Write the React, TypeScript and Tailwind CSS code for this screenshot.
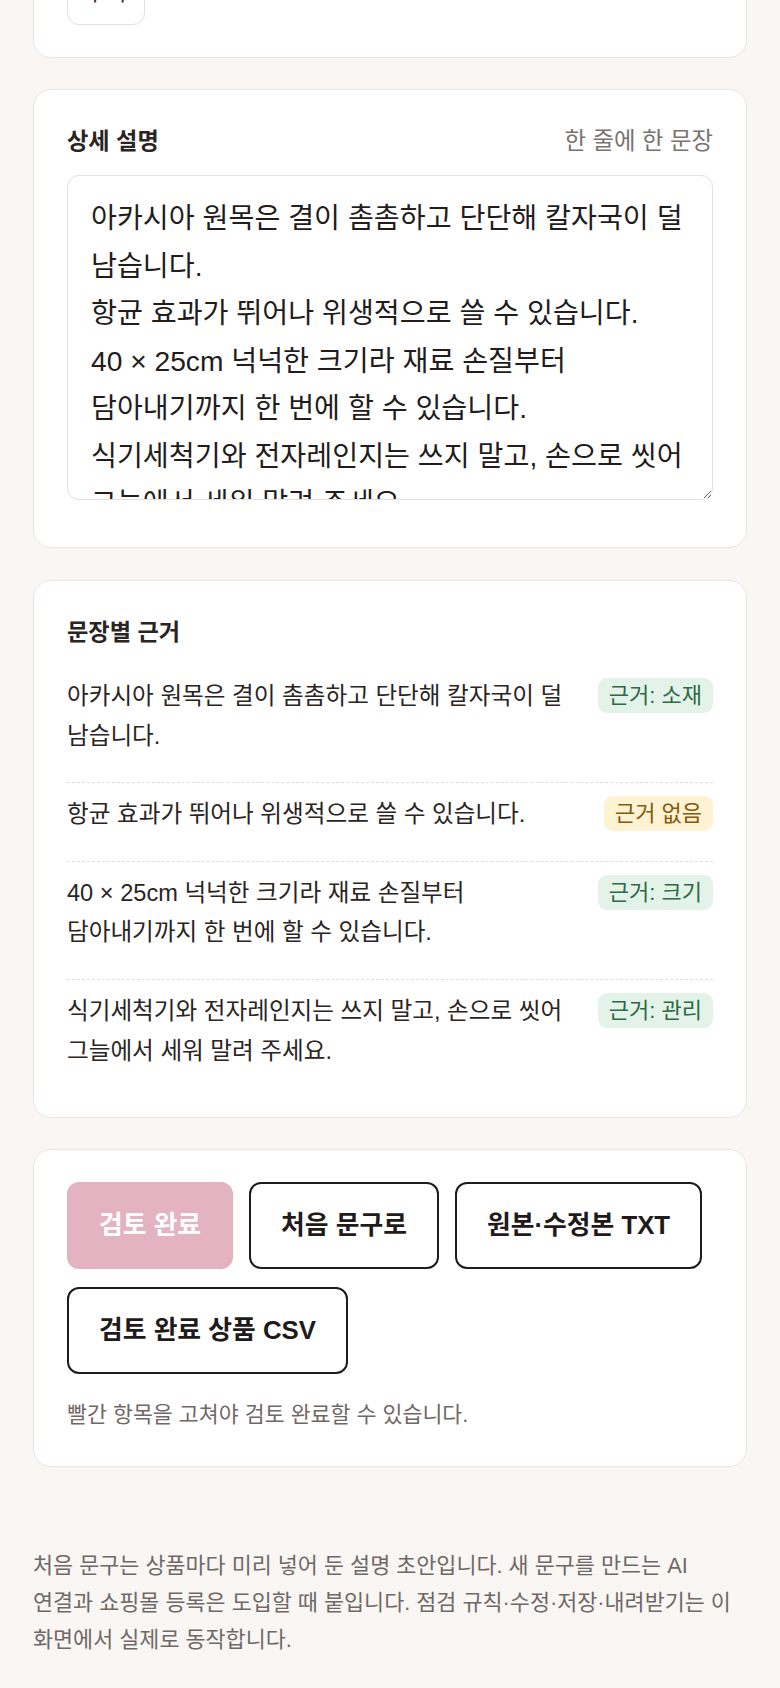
const FONT = "font-['Liberation_Sans','Noto_Sans_CJK_KR',sans-serif]";

const DESCRIPTION = [
  '아카시아 원목은 결이 촘촘하고 단단해 칼자국이 덜 남습니다.',
  '항균 효과가 뛰어나 위생적으로 쓸 수 있습니다.',
  '40 × 25cm 넉넉한 크기라 재료 손질부터 담아내기까지 한 번에 할 수 있습니다.',
  '식기세척기와 전자레인지는 쓰지 말고, 손으로 씻어 그늘에서 세워 말려 주세요.',
].join('\n');

const evidence = [
  { text: '아카시아 원목은 결이 촘촘하고 단단해 칼자국이 덜 남습니다.', tag: '근거: 소재', ok: true },
  { text: '항균 효과가 뛰어나 위생적으로 쓸 수 있습니다.', tag: '근거 없음', ok: false },
  { text: '40 × 25cm 넉넉한 크기라 재료 손질부터 담아내기까지 한 번에 할 수 있습니다.', tag: '근거: 크기', ok: true },
  { text: '식기세척기와 전자레인지는 쓰지 말고, 손으로 씻어 그늘에서 세워 말려 주세요.', tag: '근거: 관리', ok: true },
];

function Card({ className = '', children }: { className?: string; children: React.ReactNode }) {
  return (
    <section className={`rounded-[18px] border border-[#ebe4e1] bg-white px-[33px] ${className}`}>
      {children}
    </section>
  );
}

const outlineBtn =
  'h-[87px] rounded-[12px] border-2 border-[#1f1b1b] bg-white px-[30px] text-[25.8px] font-bold text-[#1f1b1b]';

export default function App() {
  return (
    <div className={`min-h-screen bg-[#f9f6f4] px-[33px] pb-[30px] break-keep text-[#241e1e] ${FONT}`}>
      <div className="flex flex-col gap-[31px]">
        {/* 위 카드 (잘린 부분) */}
        <Card className="-mt-[72px] pt-[32px] pb-[32px]">
          <button className="h-[64px] w-[78px] rounded-[12px] border border-[#e6dedb] bg-white text-[23.6px] text-[#3a3333]">
            추가
          </button>
        </Card>

        {/* 상세 설명 */}
        <Card className="pt-[33px] pb-[47px]">
          <div className="flex items-center justify-between leading-[36px]">
            <h2 className="text-[23.2px] font-semibold text-[#2b2424]">상세 설명</h2>
            <span className="text-[23.4px] text-[#7a7270]">한 줄에 한 문장</span>
          </div>
          <textarea
            defaultValue={DESCRIPTION}
            className="mt-[16px] block h-[325px] w-full overflow-hidden rounded-[12px] border border-[#e6dfdc] pt-[19px] pr-[20px] pb-[19px] pl-[23px] text-[28.2px] leading-[47.5px] break-keep text-[#221c1c] outline-none"
          />
        </Card>

        {/* 문장별 근거 */}
        <Card className="mt-[1px] pt-[33px] pb-[33px]">
          <h2 className="mb-[15px] text-[23.2px] leading-[36px] font-semibold text-[#2b2424]">문장별 근거</h2>
          <ul>
            {evidence.map((e, idx) => (
              <li
                key={idx}
                className={`flex items-start gap-[16px] pt-[12px] pb-[13px] ${idx > 0 ? 'mt-[13px] border-t border-dashed border-[#e2dddb]' : ''}`}
              >
                <p className="flex-1 text-[23.6px] leading-[39.6px] text-[#2a2424]">{e.text}</p>
                <div className="flex w-[120px] shrink-0 justify-end">
                  <span
                    className={`mt-[1px] inline-flex h-[35px] items-center rounded-[9px] px-[11px] text-[22px] whitespace-nowrap ${
                      e.ok ? 'bg-[#e4f3e9] text-[#2c6b45]' : 'bg-[#fdf2d2] text-[#87590a]'
                    }`}
                  >
                    {e.tag}
                  </span>
                </div>
              </li>
            ))}
          </ul>
        </Card>

        {/* 버튼 */}
        <Card className="pt-[32px] pb-[33px]">
          <div className="flex flex-wrap gap-x-[16px] gap-y-[18px]">
            <button className="h-[87px] rounded-[12px] border-2 border-[#e3b3c1] bg-[#e3b3c1] px-[30px] text-[25.8px] font-bold text-white">
              검토 완료
            </button>
            <button className={outlineBtn}>처음 문구로</button>
            <button className={outlineBtn}>원본·수정본 TXT</button>
            <button className={outlineBtn}>검토 완료 상품 CSV</button>
          </div>
          <p className="mt-[23px] text-[21.7px] leading-[36px] text-[#6f6866]">빨간 항목을 고쳐야 검토 완료할 수 있습니다.</p>
        </Card>
      </div>

      <p className="mt-[80px] text-[21.8px] leading-[37px] text-[#6f6866]">
        처음 문구는 상품마다 미리 넣어 둔 설명 초안입니다. 새 문구를 만드는 AI 연결과 쇼핑몰 등록은 도입할 때 붙입니다. 점검 규칙·수정·저장·내려받기는 이 화면에서 실제로 동작합니다.
      </p>
    </div>
  );
}
